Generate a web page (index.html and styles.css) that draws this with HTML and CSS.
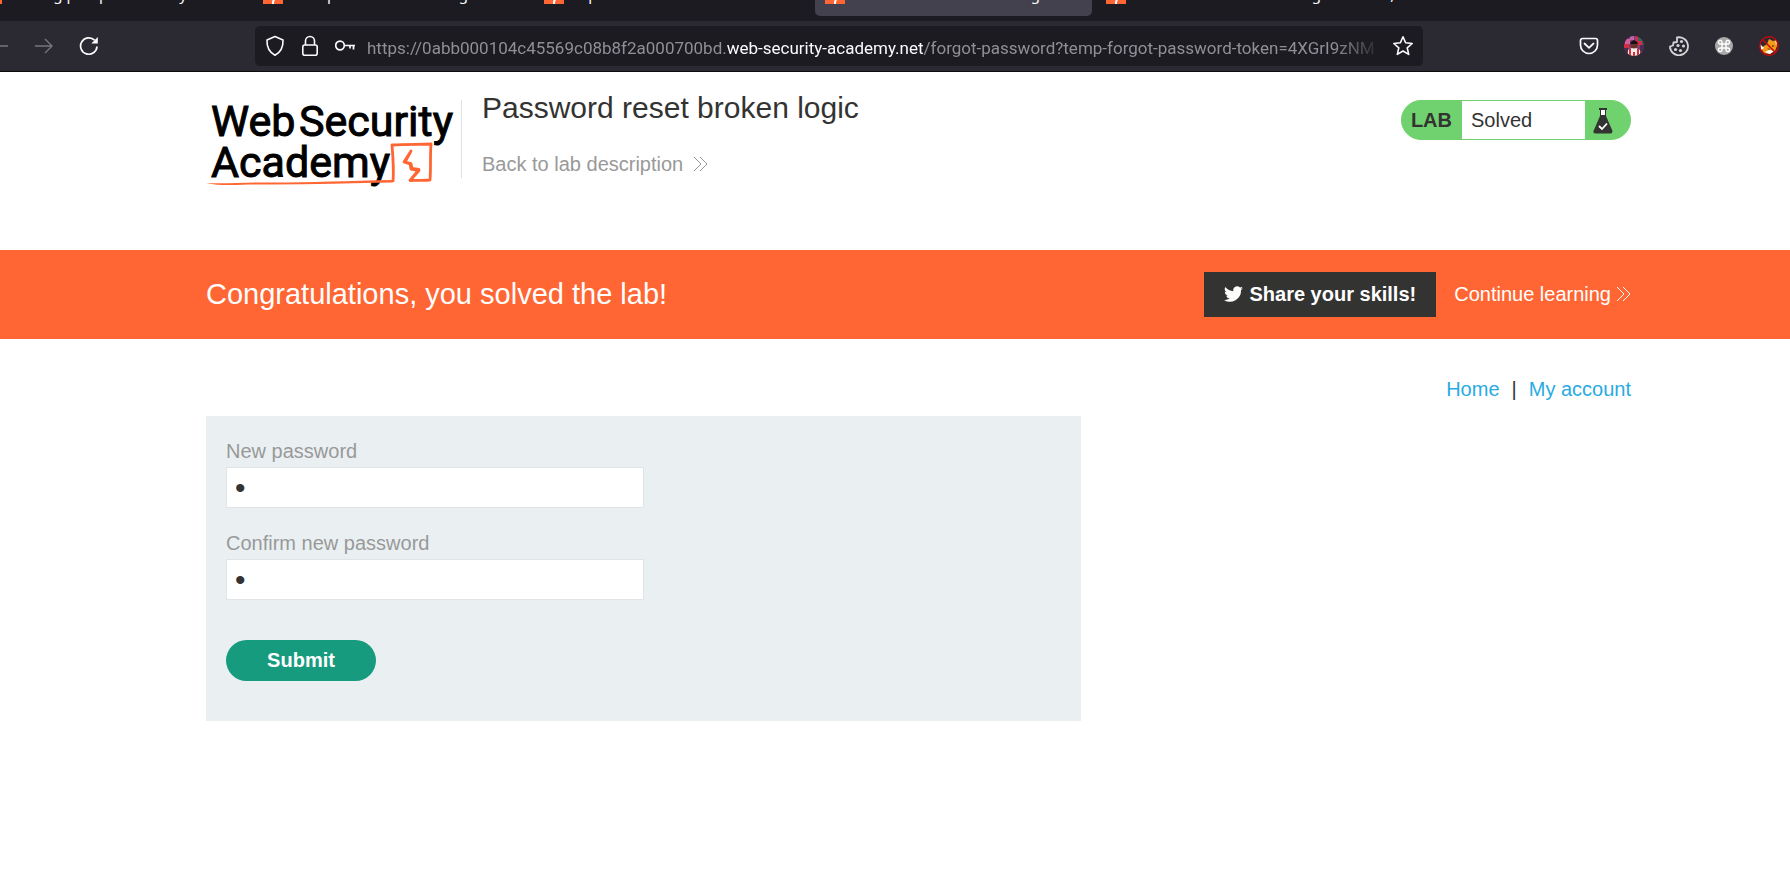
FILE: index.html
```html
<!DOCTYPE html>
<html lang="en">
<head>
<meta charset="utf-8">
<title>Password reset broken logic</title>
<link rel="stylesheet" href="styles.css">
</head>
<body>
<svg class="defs" aria-hidden="true">
  <symbol id="favicon" viewBox="0 0 20 20"><path fill="#ff6633" d="M0 0h20v20H0z"/><path fill="none" stroke="#fff" stroke-width="2" d="M11 2 7 8h5l-2 5h2l-2 5v2"/></symbol>
  <symbol id="chevrons" viewBox="0 0 15 16"><path fill="none" stroke="currentColor" d="m1 1 7 7-7 7M7 1l7 7-7 7"/></symbol>
</svg>
<div class="browser">
  <div class="tabs">
    <div class="tab"><svg class="favicon"><use href="#favicon"/></svg><span>Finding pumps a security</span></div>
    <div class="tab"><svg class="favicon"><use href="#favicon"/></svg><span>Stamp reset broken a logic</span></div>
    <div class="tab"><svg class="favicon"><use href="#favicon"/></svg><span>Explain</span></div>
    <div class="tab active"><svg class="favicon"><use href="#favicon"/></svg><span>Password reset broken logic</span></div>
    <div class="tab"><svg class="favicon"><use href="#favicon"/></svg><span>Password reset broken logic - solved, lab</span></div>
  </div>
  <div class="toolbar">
    <div class="nav">
      <button class="tool dim" aria-label="Back"><svg width="20" height="20" viewBox="0 0 20 20"><path d="M19 10H2M9 3l-7 7 7 7"/></svg></button>
      <button class="tool dim" aria-label="Forward"><svg width="20" height="20" viewBox="0 0 20 20"><path d="M1 10h17M11 3l7 7-7 7"/></svg></button>
      <button class="tool" aria-label="Reload"><svg width="20" height="20" viewBox="0 0 20 20"><path stroke-width="1.7" d="M18 10.500A8.200 8.200 0 1 1 15.600 4.200"/><path fill="currentColor" stroke="none" d="M18.800 1v6.500h-6.500z"/></svg></button>
    </div>
    <div class="urlbar">
      <button class="tool" aria-label="Tracking protection"><svg width="20" height="22" viewBox="0 0 20 22"><path stroke-width="1.600" d="M10 1.500 18 5c.3 6-1.200 11.500-8 15.300C3.200 16.500 1.700 11 2 5z" stroke-linejoin="round"/></svg></button>
      <button class="tool" aria-label="Site information"><svg width="20" height="22" viewBox="0 0 20 22"><rect x="2.800" y="10" width="14.400" height="10.200" rx="2" stroke-width="1.600"/><path stroke-width="1.600" d="M5.500 10V6a4.500 4.500 0 0 1 9 0v4"/></svg></button>
      <button class="tool" aria-label="Saved passwords"><svg width="20" height="22" viewBox="1 0 20 22"><circle cx="6" cy="10.500" r="4.300" stroke-width="1.700"/><path stroke-width="1.700" d="M10.300 10.500H21M19.500 10.500v4M16 10.500v3"/></svg></button>
      <div class="url" role="textbox" aria-label="Address">https://0abb000104c45569c08b8f2a000700bd.<b>web-security-academy.net</b>/forgot-password?temp-forgot-password-token=4XGrI9zNM</div>
      <button class="tool" aria-label="Bookmark"><svg width="22" height="22" viewBox="0 0 22 22"><path stroke-width="1.600" stroke-linejoin="round" d="m11 1.800 2.600 6 6.600.700-5 4.300 1.500 6.600L11 16l-5.700 3.400 1.500-6.600-5-4.300 6.600-.700z"/></svg></button>
    </div>
    <div class="extensions">
      <button class="tool" aria-label="Save to Pocket"><svg width="20" height="20" viewBox="0 0 20 20"><path stroke-width="1.700" stroke-linejoin="round" d="M3.500 2.500h13A2 2 0 0 1 18.500 4.500V9a8.500 8.500 0 0 1-17 0V4.500a2 2 0 0 1 2-2z"/><path stroke-width="1.800" stroke-linecap="round" d="m5.500 7.500 4.500 4.300 4.500-4.300"/></svg></button>
      <button class="tool" aria-label="Profile"><svg width="20" height="20" viewBox="0 0 20 20"><clipPath id="round"><circle cx="10" cy="10" r="10"/></clipPath><g clip-path="url(#round)" stroke="none"><path fill="#8b3b72" d="M0 0h20v20H0z"/><path fill="#cf629d" d="M1 3h5v5H1z"/><path fill="#b565b0" d="M6 0h4v4H6z"/><path fill="#316961" d="M14 1h5v7h-5z"/><path fill="#d52c43" d="M11 0h3v5h4v4h-5zM0 8h5v4H0z"/><path fill="#42304f" d="M0 12h4v4H0zM16 9h4v6h-4z"/><path fill="#eee" d="M4 14l4-2h4l4 2v6H4z"/><path fill="#df2931" d="M5 13h2v7H5zM13 13h2v7h-2zM9 16h2v4H9z"/><circle cx="10" cy="9" r="3.500" fill="#673326"/><path fill="#171119" d="M6.500 8V6L10 4l3.500 2v2z"/></g></svg></button>
      <button class="tool cookie" aria-label="Cookies"><svg width="20" height="20" viewBox="0 0 20 20"><path stroke-width="1.800" stroke-linejoin="round" d="M8 1.500a9 9 0 1 1-7 9l3-1 .5-3L8 6z"/><g fill="currentColor" stroke="none"><circle cx="12.500" cy="5.500" r="1.600"/><circle cx="9" cy="9.500" r="1.600"/><circle cx="14.500" cy="10" r="1.600"/><circle cx="6.500" cy="13.500" r="1.600"/><circle cx="11.500" cy="14.500" r="1.600"/></g></svg></button>
      <button class="tool" aria-label="Shortcuts"><svg width="20" height="20" viewBox="0 0 20 20"><circle cx="10" cy="10" r="9" fill="#aaa" stroke="none"/><path stroke="#fff" stroke-width="1.400" d="M8 8h4v4H8zM8 8H6.500A1.800 1.800 0 1 1 8 6.500zM12 8V6.500A1.800 1.800 0 1 1 13.500 8zM12 12h1.500A1.800 1.800 0 1 1 12 13.500zM8 12v1.500A1.800 1.800 0 1 1 6.500 12z"/></svg></button>
      <button class="tool" aria-label="Proxy disabled"><svg width="20" height="20" viewBox="0 0 20 20"><g stroke="none"><path fill="#f39a18" d="M2 12l6-4 2-5 4 2 4-1v6l-2 5-6 3-5-1z"/><path fill="#fff" d="M1 8l4 4-3 2zM16 3l2 2-1 4zM6 16l4-2 5 1-4 3z"/><path fill="#7c3b14" d="m8 12 3 1-1 1zM13 9l3 1-3 1z"/></g><circle cx="10" cy="10" r="9.200" stroke="#c5080c" stroke-width="1.400"/><path stroke="#c5080c" stroke-width="1.500" d="m3.500 3.500 13 13"/></svg></button>
    </div>
  </div>
</div>

<header class="header wrap">
  <a class="logo" href="#" aria-label="Web Security Academy">
    <svg width="250" height="90" viewBox="0 0 250 90">
      <g class="logo-text"><text x="5" y="36">Web</text><text x="93" y="36">Security</text><text x="5" y="77">Academy</text></g>
      <path fill="#ff6633" d="M0 83c15 1 35-.5 52-.5 45 .5 85-1.500 135-2.500v2.500c-45 .500-90 2.500-135 2-18 0-37 2-52-1.500z"/>
      <path fill="none" stroke="#ff6633" stroke-width="2.800" stroke-linejoin="round" d="M187 82c1-12 0-25-1-37 14-1 27-.5 39-1-1 12 0 24-1 36-7 1-13 0-20 .500l9-11-7-1-1-5-6-1.500 6-11-7 11 6 2 1 5 8 1.500-8 9"/>
    </svg>
  </a>
  <div class="title">
    <h1>Password reset broken logic</h1>
    <a class="back" href="#">Back to lab description <svg class="chevrons"><use href="#chevrons"/></svg></a>
  </div>
  <div class="status">
    <strong>LAB</strong>
    <span class="state">Solved</span>
    <svg class="flask" width="20" height="26" viewBox="0 0 20 26"><path fill="#333332" d="M6 0h8v2H6zM7 2h6v6l6.500 15q0 2.500-2 2.500h-15Q0 25.500.5 23L7 8z"/><path fill="#fff" d="M8 2h4v5H8z"/><path fill="none" stroke="#fff" stroke-width="1.800" d="m6 18 3 3 5-5.500"/></svg>
  </div>
</header>

<section class="banner wrap">
  <h2>Congratulations, you solved the lab!</h2>
  <button class="share"><svg width="19" height="18" viewBox="0 2 24 20"><path fill="currentColor" d="M24 4.600a10 10 0 0 1-2.800.8 5 5 0 0 0 2.100-2.700 10 10 0 0 1-3.100 1.200 4.900 4.900 0 0 0-8.400 4.500A14 14 0 0 1 1.700 3.200a4.900 4.900 0 0 0 1.500 6.500 5 5 0 0 1-2.200-.6c0 2.300 1.600 4.400 3.900 4.900a5 5 0 0 1-2.200.1 4.900 4.900 0 0 0 4.600 3.400A10 10 0 0 1 0 19.500 14 14 0 0 0 21.500 7.100 10 10 0 0 0 24 4.600z"/></svg>Share your skills!</button>
  <a class="continue" href="#">Continue learning <svg class="chevrons"><use href="#chevrons"/></svg></a>
</section>

<main class="wrap">
  <nav class="links"><a href="#">Home</a><span>|</span><a href="#">My account</a></nav>
  <form class="form">
    <label for="new">New password</label>
    <input id="new" type="password" value="p">
    <label for="confirm">Confirm new password</label>
    <input id="confirm" type="password" value="p">
    <button class="submit" type="button">Submit</button>
  </form>
</main>
</body>
</html>
```
FILE: styles.css
```css
* { box-sizing: border-box; }
body {
  margin: 0;
  background: #fff;
  color: #333332;
  font: 20px/24px "Liberation Sans", Arial, sans-serif;
}
h1, h2 { margin: 0; font-weight: normal; }
a { text-decoration: none; }
button { border: 0; padding: 0; font: inherit; color: inherit; }
svg { display: block; flex: none; }
.defs { position: absolute; width: 0; height: 0; }

/* Browser chrome */
.browser { color: #fbfbfe; background: #2b2a33; border-bottom: 1px solid #0c0c0d; overflow: hidden; }
.tabs {
  display: flex;
  align-items: flex-end;
  gap: 4px;
  height: 21px;
  margin-left: -28px;
  padding-bottom: 5px;
  overflow: hidden;
  background: #1c1b22;
}
.tab {
  display: flex;
  align-items: center;
  flex: none;
  gap: 8px;
  width: 277px;
  height: 44px;
  padding: 0 10px;
  border-radius: 5px;
  font: 15px/20px "Noto Sans", sans-serif;
  white-space: nowrap;
}
.tab.active { background: #42414d; }
.favicon { width: 20px; height: 20px; }
.toolbar { display: flex; align-items: center; height: 50px; }
.nav { display: flex; gap: 25px; width: 254px; margin-left: -11px; }
.tool { background: none; }
.tool svg { fill: none; stroke: currentColor; stroke-width: 1.3; }
.dim { color: #77767d; }
.urlbar {
  display: flex;
  align-items: center;
  flex: 1;
  min-width: 0;
  height: 40px;
  margin-left: 12px;
  padding: 0 9px 0 10px;
  gap: 15px;
  border-radius: 5px;
  background: #1c1b22;
}
.url {
  flex: 1;
  overflow: hidden;
  margin: 0 -7px 0 -3px;
  padding-top: 3px;
  color: #8f8f95;
  font: 17px/24px Roboto, sans-serif;
  white-space: nowrap;
  -webkit-mask-image: linear-gradient(to right, #000 calc(100% - 50px), transparent);
  mask-image: linear-gradient(to right, #000 calc(100% - 50px), transparent);
}
.url b { color: #fbfbfe; font-weight: normal; }
.extensions { display: flex; gap: 25px; padding: 0 11px 0 156px; }
.cookie { color: #d4d4d6; }

/* Lab header */
.wrap { padding-left: 206px; padding-right: 159px; }
.header { display: flex; align-items: flex-start; padding-top: 28px; height: 178px; }
.logo { width: 256px; height: 78px; border-right: 1px solid #e0e0e0; }
.logo svg { overflow: visible; }
.logo-text { fill: #000; stroke: #000; stroke-width: 1; font: 43px Roboto, sans-serif; }
.title { flex: 1; margin-left: 20px; }
.title h1 { margin-top: -10px; font-size: 30px; line-height: 36px; }
.back { display: flex; align-items: center; gap: 10px; margin-top: 26px; color: #999; }
.chevrons { width: 15px; height: 16px; }
.status {
  display: flex;
  align-items: stretch;
  height: 40px;
  border: 1px solid #70d26e;
  border-radius: 20px;
  overflow: hidden;
  background: #70d26e;
  line-height: 38px;
}
.status strong { padding: 0 10px 0 9px; }
.state { width: 123px; padding-left: 9px; background: #fff; }
.flask { margin: 7px 17px 0 8px; }

/* Solved banner */
.banner { display: flex; align-items: center; height: 89px; background: #ff6633; color: #fff; }
.banner h2 { flex: 1; padding-bottom: 2px; font-size: 29px; line-height: 36px; }
.share {
  display: flex;
  align-items: center;
  gap: 6px;
  height: 45px;
  padding: 0 20px 2px;
  background: #333332;
  font-weight: bold;
}
.continue { display: flex; align-items: center; gap: 5px; margin-left: 18px; padding-bottom: 2px; color: #fff; }

/* Reset form */
.links { display: flex; justify-content: flex-end; gap: 12px; padding: 38px 0 15px; }
.links a { color: #29abe2; }
.form {
  display: flex;
  flex-direction: column;
  align-items: flex-start;
  width: 875px;
  max-width: 100%;
  padding: 23px 20px 40px;
  background: #eaf0f2;
}
.form label { margin-bottom: 4px; color: #999; }
.form input {
  width: 50%;
  height: 41px;
  margin-bottom: 23px;
  padding: 0 8px;
  border: 1px solid #e0e4e6;
  border-radius: 0;
  background: #fff;
  color: #333332;
  font: 30px "Liberation Sans", Arial, sans-serif;
}
.submit {
  width: 150px;
  height: 41px;
  margin-top: 17px;
  padding-bottom: 2px;
  border-radius: 21px;
  background: #169b7f;
  color: #fff;
  font-weight: bold;
}
```
